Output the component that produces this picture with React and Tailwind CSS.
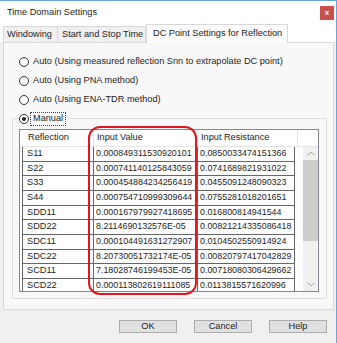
const rows = [
  ["S11", "0.000849311530920101", "0.0850033474151366"],
  ["S22", "0.000741140125843059", "0.0741689821931022"],
  ["S33", "0.000454884234256419", "0.0455091248090323"],
  ["S44", "0.000754710999309644", "0.0755281018201651"],
  ["SDD11", "0.000167979927418695", "0.016800814941544"],
  ["SDD22", "8.2114690132576E-05", "0.00821214335086418"],
  ["SDC11", "0.000104491631272907", "0.0104502550914924"],
  ["SDC22", "8.20730051732174E-05", "0.00820797417042829"],
  ["SCD11", "7.18028746199453E-05", "0.00718080306429662"],
  ["SCD22", "0.000113802619111085", "0.0113815571620996"],
];

const options = [
  "Auto (Using measured reflection Snn to extrapolate DC point)",
  "Auto (Using PNA method)",
  "Auto (Using ENA-TDR method)",
];

function Radio({ checked }) {
  return (
    <span className="w-[10px] h-[10px] rounded-full border border-[#333] bg-white flex items-center justify-center shrink-0">
      {checked && <span className="w-[4px] h-[4px] rounded-full bg-[#222]" />}
    </span>
  );
}

function Chevron({ up }) {
  return (
    <svg width="8" height="5" viewBox="0 0 8 5">
      <path d={up ? "M0.5 4.5 L4 1 L7.5 4.5" : "M0.5 0.5 L4 4 L7.5 0.5"} fill="none" stroke="#a6a6a6" strokeWidth="1" />
    </svg>
  );
}

export default function App() {
  return (
    <div className="w-[337px] h-[343px] bg-[#f0f0f0] border-t border-r border-[#6aa6dc] relative overflow-hidden font-['Liberation_Sans',Arial,sans-serif] text-[9.2px] text-[#1e1e1e]">
      {/* title bar */}
      <div className="h-[23px] bg-white flex items-center justify-between pl-[7px] pr-[2px]">
        <span>Time Domain Settings</span>
        <div className="w-[14px] h-[14px] bg-[#c9504f] flex items-center justify-center text-white text-[8px] leading-none font-bold">x</div>
      </div>

      {/* tabs */}
      <div className="h-[18px] bg-white flex items-end pl-[3px]">
        <div className="h-[16px] w-[55px] border-t border-l border-r border-[#d9d9d9] bg-[#f0f0f0] flex items-center pl-[3px]">Windowing</div>
        <div className="h-[16px] w-[88px] border-t border-r border-[#d9d9d9] bg-[#f0f0f0] flex items-center pl-[4px]">Start and Stop Time</div>
        <div className="h-[19px] w-[142px] -mb-px relative z-10 border-t border-l border-r border-[#d9d9d9] bg-[#fbfbfb] flex items-center pl-[6px]">DC Point Settings for Reflection</div>
      </div>

      {/* tab page */}
      <div className="ml-[3px] w-[331px] h-[268px] border border-[#d9d9d9] bg-[#f8f8f8] pt-[9px]">
        {options.map((o) => (
          <div key={o} className="h-[19px] flex items-center gap-[4px] pl-[15px]">
            <Radio />
            <span>{o}</span>
          </div>
        ))}

        <div className="mt-[9px] ml-[8px] w-[315px] h-[181px] border border-[#dcdcdc] rounded-[2px] relative">
          <div className="absolute left-[6px] top-[-7px] h-[14px] flex items-center gap-[1px] bg-[#f8f8f8] pr-[1px]">
            <Radio checked />
            <span className="border border-dotted border-[#444] px-[2px] h-[14px] flex items-center">Manual</span>
          </div>

          <div className="mt-[10px] ml-[6px] w-[300px] h-[163px] border border-[#828790] bg-white overflow-hidden">
            <div className="h-[17px] border-b border-[#e5e5e5] flex">
              <div className="w-[74px] border-r border-[#e5e5e5] pl-[8px] flex items-center">Reflection</div>
              <div className="w-[104px] border-r border-[#e5e5e5] pl-[3px] flex items-center">Input Value</div>
              <div className="w-[100px] border-r border-[#e5e5e5] pl-[3px] flex items-center">Input Resistance</div>
            </div>
            <div className="flex h-[144px]">
              <div className="w-[283px] overflow-hidden pl-[2px] text-[8.9px]">
                {rows.map(([name, val, res]) => (
                  <div key={name} className="h-[14.67px] flex">
                    <div className="w-[72px] border-l border-r border-b border-[#666] pl-[4px] flex items-center text-[9.2px]">{name}</div>
                    <div className="w-[104px] border-r border-b border-[#666] pl-[2px] flex items-center overflow-hidden whitespace-nowrap">{val}</div>
                    <div className="w-[97px] border-r border-b border-[#666] pl-[2px] flex items-center overflow-hidden whitespace-nowrap">{res}</div>
                  </div>
                ))}
              </div>
              <div className="w-[15px] bg-[#f0f0f0] flex flex-col">
                <div className="h-[13px] flex items-center justify-center"><Chevron up /></div>
                <div className="h-[81px] bg-[#cdcdcd]" />
                <div className="flex-1" />
                <div className="h-[14px] flex items-center justify-center"><Chevron /></div>
              </div>
            </div>
          </div>
        </div>
      </div>

      {/* buttons */}
      <div className="mt-[10px] flex justify-end gap-[17px] pr-[9px]">
        {["OK", "Cancel", "Help"].map((b) => (
          <div key={b} className="w-[58px] h-[13px] border border-[#adadad] bg-[#e1e1e1] flex items-center justify-center leading-none">{b}</div>
        ))}
      </div>

      {/* red annotation */}
      <div className="absolute left-[88px] top-[125px] w-[109px] h-[169px] border-[2px] border-[#e4161d] rounded-[12px] pointer-events-none" />
    </div>
  );
}
